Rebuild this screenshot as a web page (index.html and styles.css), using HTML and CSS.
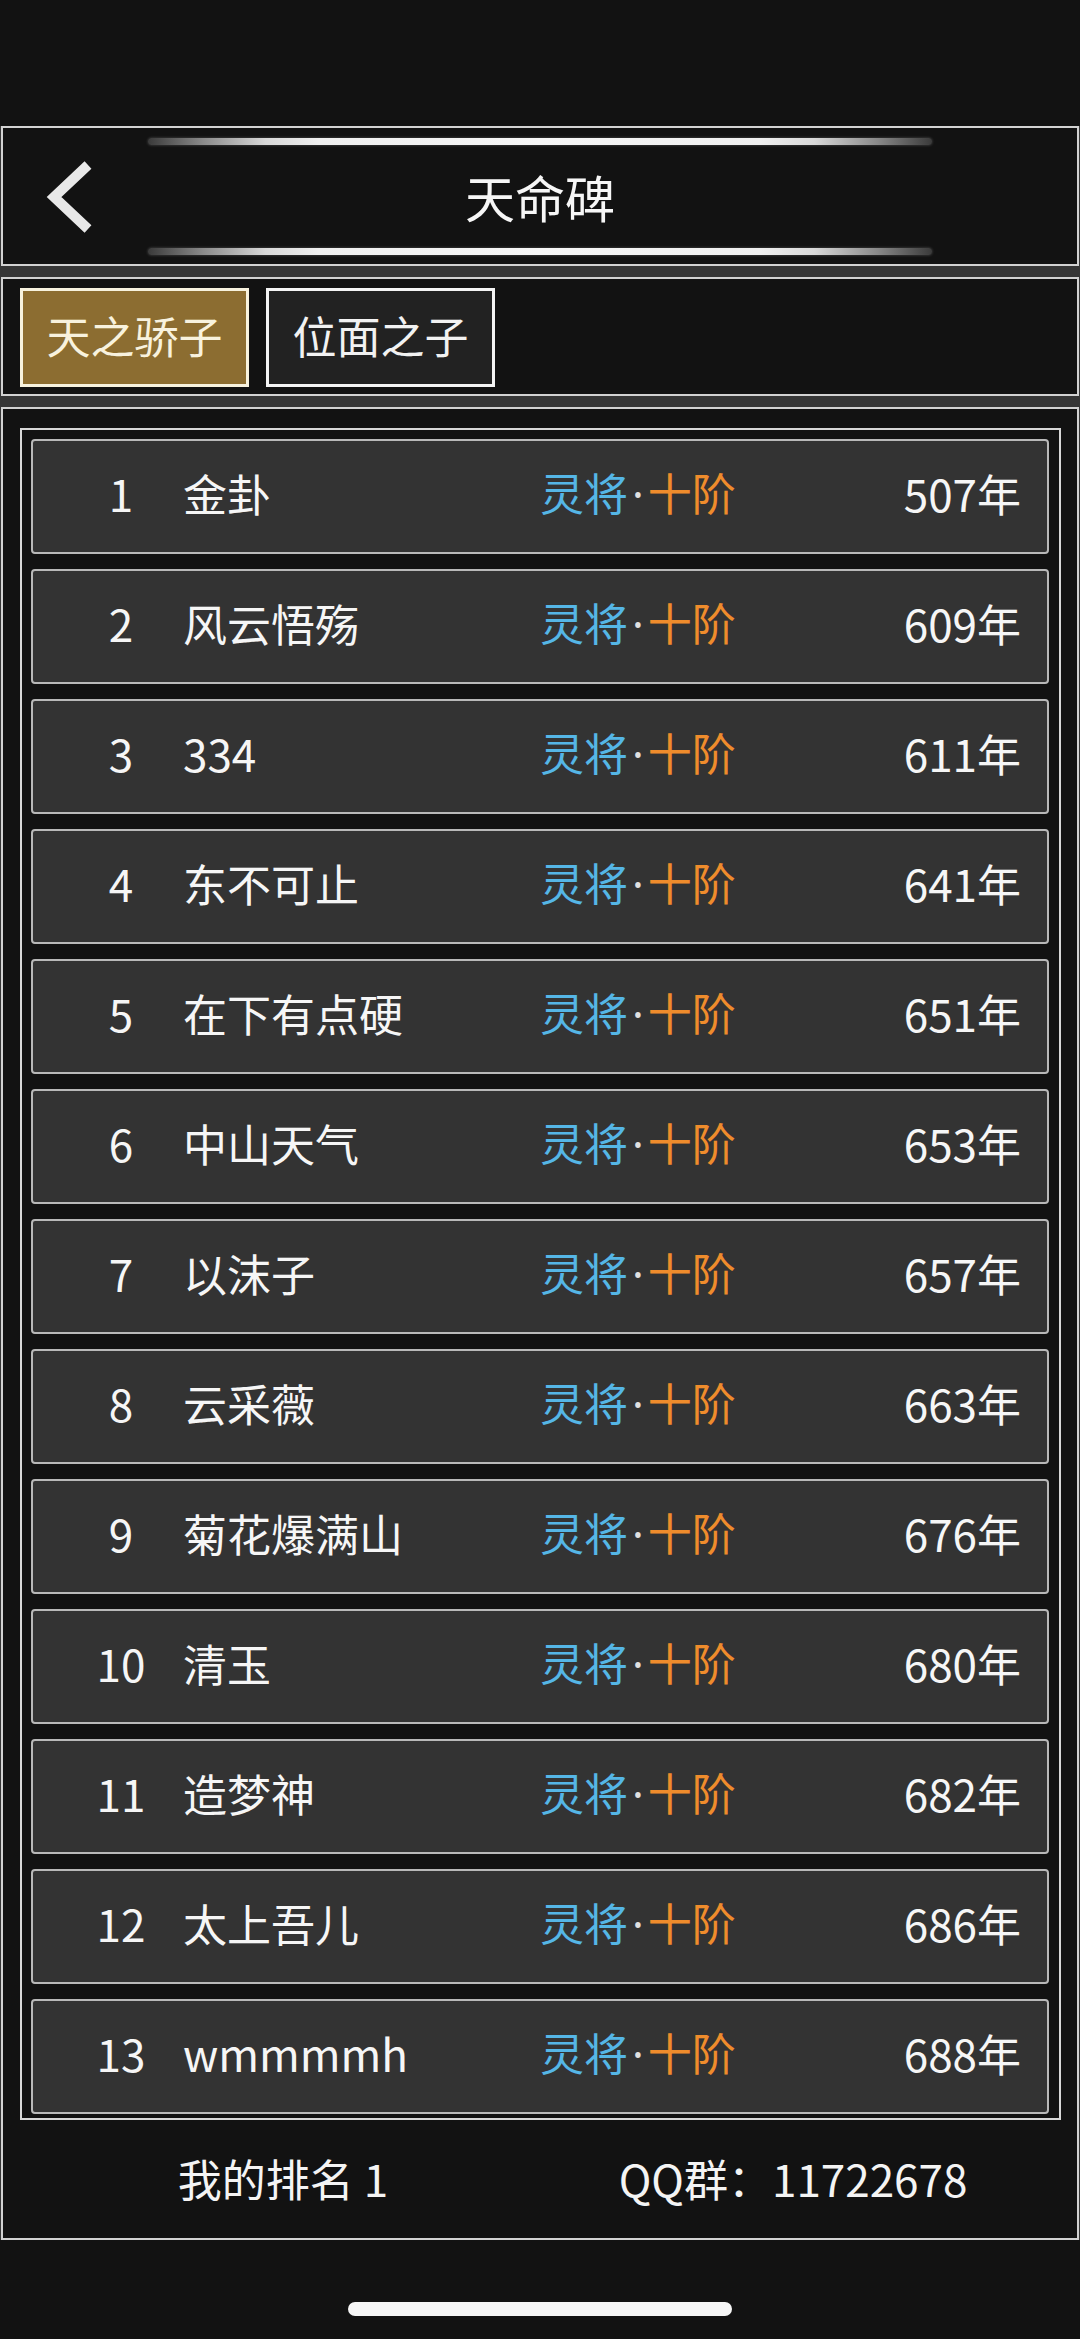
FILE: index.html
```html
<!DOCTYPE html>
<html lang="zh-CN">
<head>
<meta charset="utf-8">
<title>天命碑</title>
<link rel="stylesheet" href="styles.css">
</head>
<body>
<div class="page">
  <div class="status"></div>
  <div class="panels">
    <header class="box header">
      <div class="back">
        <svg class="chev" width="60" height="82" viewBox="0 0 60 82">
          <path d="M49 9 L15 41 L49 73" fill="none" stroke="#e8e8e8" stroke-width="10" stroke-linecap="butt" stroke-linejoin="miter"/>
        </svg>
      </div>
      <div class="head-center">
        <div class="deco"></div>
        <div class="title">天命碑</div>
        <div class="deco"></div>
      </div>
      <div></div>
    </header>
    <nav class="box tabs">
      <div class="tab active">天之骄子</div>
      <div class="tab">位面之子</div>
    </nav>
    <section class="box list">
      <div class="frame">
        <div class="row"><span class="rank">1</span><span class="name">金卦</span><span class="lv"><span class="b">灵将</span><span class="dot">·</span><span class="o">十阶</span></span><span class="yr">507年</span></div>
        <div class="row"><span class="rank">2</span><span class="name">风云悟殇</span><span class="lv"><span class="b">灵将</span><span class="dot">·</span><span class="o">十阶</span></span><span class="yr">609年</span></div>
        <div class="row"><span class="rank">3</span><span class="name">334</span><span class="lv"><span class="b">灵将</span><span class="dot">·</span><span class="o">十阶</span></span><span class="yr">611年</span></div>
        <div class="row"><span class="rank">4</span><span class="name">东不可止</span><span class="lv"><span class="b">灵将</span><span class="dot">·</span><span class="o">十阶</span></span><span class="yr">641年</span></div>
        <div class="row"><span class="rank">5</span><span class="name">在下有点硬</span><span class="lv"><span class="b">灵将</span><span class="dot">·</span><span class="o">十阶</span></span><span class="yr">651年</span></div>
        <div class="row"><span class="rank">6</span><span class="name">中山天气</span><span class="lv"><span class="b">灵将</span><span class="dot">·</span><span class="o">十阶</span></span><span class="yr">653年</span></div>
        <div class="row"><span class="rank">7</span><span class="name">以沫子</span><span class="lv"><span class="b">灵将</span><span class="dot">·</span><span class="o">十阶</span></span><span class="yr">657年</span></div>
        <div class="row"><span class="rank">8</span><span class="name">云采薇</span><span class="lv"><span class="b">灵将</span><span class="dot">·</span><span class="o">十阶</span></span><span class="yr">663年</span></div>
        <div class="row"><span class="rank">9</span><span class="name">菊花爆满山</span><span class="lv"><span class="b">灵将</span><span class="dot">·</span><span class="o">十阶</span></span><span class="yr">676年</span></div>
        <div class="row"><span class="rank">10</span><span class="name">清玉</span><span class="lv"><span class="b">灵将</span><span class="dot">·</span><span class="o">十阶</span></span><span class="yr">680年</span></div>
        <div class="row"><span class="rank">11</span><span class="name">造梦神</span><span class="lv"><span class="b">灵将</span><span class="dot">·</span><span class="o">十阶</span></span><span class="yr">682年</span></div>
        <div class="row"><span class="rank">12</span><span class="name">太上吾儿</span><span class="lv"><span class="b">灵将</span><span class="dot">·</span><span class="o">十阶</span></span><span class="yr">686年</span></div>
        <div class="row"><span class="rank">13</span><span class="name">wmmmmh</span><span class="lv"><span class="b">灵将</span><span class="dot">·</span><span class="o">十阶</span></span><span class="yr">688年</span></div>
      </div>
      <footer class="foot">
        <div class="cell">我的排名 1</div>
        <div class="cell">QQ群：11722678</div>
      </footer>
    </section>
  </div>
  <div class="home-area"><div class="home-bar"></div></div>
</div>
</body>
</html>
```
FILE: styles.css
```css
* { box-sizing: border-box; }
html, body {
  margin: 0;
  padding: 0;
  background: #121212;
}
body {
  font-family: "Noto Sans CJK SC", "Noto Sans", sans-serif;
  color: #f4f4f4;
  width: 1080px;
  height: 2339px;
  overflow: hidden;
}
.page {
  display: flex;
  flex-direction: column;
}
.status {
  height: 126px;
}
.panels {
  background: #363636;
  display: flex;
  flex-direction: column;
  gap: 11px;
  padding: 0 1px;
}
.box {
  background: #121212;
  border: 2px solid #d2d2d2;
}
.header {
  height: 140px;
  display: grid;
  grid-template-columns: 145px 1fr 145px;
}
.back {
  padding-left: 36px;
  padding-top: 28px;
}
.chev { display: block; }
.head-center {
  display: flex;
  flex-direction: column;
  justify-content: space-between;
  align-items: stretch;
  padding: 10px 0 9px;
}
.deco {
  height: 7px;
  border-radius: 4px;
  background: linear-gradient(90deg, #3a3a3a 0%, #8a8a8a 7%, #d8d8d8 15%, #efefef 22%, #f6f6f6 50%, #efefef 78%, #d8d8d8 85%, #8a8a8a 93%, #3a3a3a 100%);
  box-shadow: 0 0 3px rgba(255,255,255,0.25);
}
.title {
  text-align: center;
  font-size: 50px;
  line-height: 60px;
  color: #f6f6f6;
  padding-bottom: 2px;
}
.tabs {
  height: 119px;
  display: flex;
  gap: 17px;
  padding: 9px 17px 7px;
}
.tab {
  width: 229px;
  height: 99px;
  border: 3px solid #f4f4f4;
  background: #222222;
  color: #f2f2f2;
  font-size: 44px;
  display: flex;
  align-items: center;
  justify-content: center;
  padding-bottom: 6px;
}
.tab.active {
  background: #8c6d31;
  border-color: #f7f2de;
  color: #f8f2de;
}
.list {
  padding: 19px 16px 0 17px;
  display: flex;
  flex-direction: column;
}
.frame {
  border: 2px solid #d8d8d8;
  padding: 9px 10px 4px 9px;
  display: flex;
  flex-direction: column;
  gap: 15px;
}
.row {
  height: 115px;
  background: #333333;
  border: 2px solid #b9b9b9;
  border-radius: 4px;
  display: flex;
  align-items: center;
  padding: 0 26px 8px 40px;
  font-size: 44px;
  color: #f6f6f6;
  line-height: 1;
}
.rank {
  width: 96px;
  text-align: center;
  flex: none;
}
.name {
  width: 357px;
  margin-left: 14px;
  flex: none;
  white-space: nowrap;
}
.lv {
  flex: none;
  white-space: nowrap;
}
.b { color: #55b6e6; }
.o { color: #ef8c2c; }
.dot {
  color: #e0e0e0;
  font-family: "Noto Sans", "DejaVu Sans", sans-serif;
  margin: 0 4px;
}
.yr {
  flex: 1;
  text-align: right;
}
.foot {
  height: 118px;
  display: grid;
  grid-template-columns: 560px 460px;
  align-items: center;
  font-size: 44px;
  color: #f4f4f4;
  padding-bottom: 2px;
  margin-left: -17px;
}
.cell {
  text-align: center;
  white-space: nowrap;
}
.home-area {
  height: 99px;
  display: flex;
  justify-content: center;
  padding-top: 62px;
}
.home-bar {
  width: 384px;
  height: 14px;
  border-radius: 7px;
  background: #f6f6f6;
}
```
